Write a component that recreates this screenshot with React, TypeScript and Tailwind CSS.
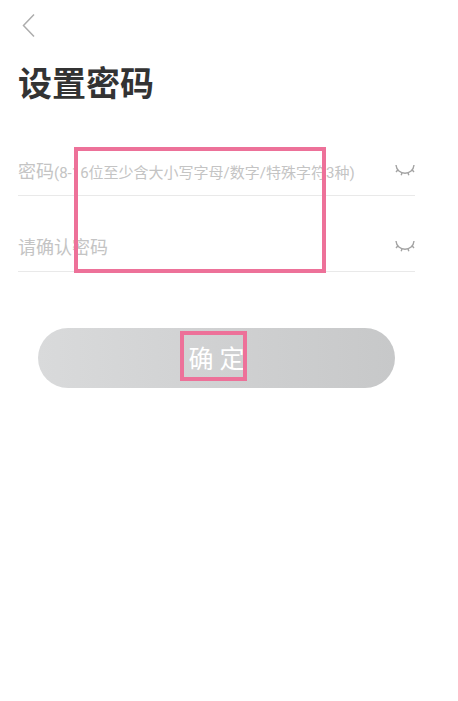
import React, { useState } from 'react';

interface FieldProps {
  id: string;
  label: string;
  hint?: string;
}

function ClosedEye() {
  return (
    <svg width="20" height="14" viewBox="0 0 20 14" fill="none" stroke="#a3a3a3" strokeWidth="1.4">
      <path d="M1 0C1.3 4.8 5.4 8.2 10 8.2S18.7 4.8 19 0" />
      <path d="M3 4.8L1 7M7 7.8L6.2 10.2M13 7.8L13.8 10.2M17 4.8L19 7" />
    </svg>
  );
}

function PasswordField({ id, label, hint }: FieldProps) {
  const [visible, setVisible] = useState(false);

  return (
    <div className="flex h-12 items-center border-b border-[#e9e9e9]">
      <div className="grid flex-1 items-center">
        <input
          id={id}
          type={visible ? 'text' : 'password'}
          placeholder=" "
          className="peer col-start-1 row-start-1 w-full bg-transparent text-lg text-[#333333] outline-none"
        />
        <label
          htmlFor={id}
          className="invisible col-start-1 row-start-1 whitespace-nowrap text-lg text-[#c4c4c4] peer-placeholder-shown:visible"
        >
          {label}
          {hint && <span className="text-[15px]">{hint}</span>}
        </label>
      </div>
      <button type="button" aria-label="显示密码" onClick={() => setVisible(!visible)}>
        <ClosedEye />
      </button>
    </div>
  );
}

export default function App() {
  return (
    <div className="min-h-screen bg-white pt-3 pr-[43px] pl-[18px] font-[Roboto,'Noto_Sans_CJK_SC',sans-serif]">
      <button type="button" aria-label="返回" className="block pl-1">
        <svg width="14" height="28" viewBox="0 0 14 28" fill="none" stroke="#adadad" strokeWidth="1.5">
          <path d="M12 2.5L1.5 13.5L12 24.5" />
        </svg>
      </button>

      <h1 className="mt-6 text-[34px] leading-10 font-bold text-[#333333]">设置密码</h1>

      <form onSubmit={(e) => e.preventDefault()}>
        <div className="relative mt-11 flex flex-col gap-7">
          <PasswordField id="password" label="密码" hint="(8-16位至少含大小写字母/数字/特殊字符3种)" />
          <PasswordField id="confirm" label="请确认密码" />
          {/* highlight around both inputs */}
          <div className="pointer-events-none absolute -top-px -bottom-px left-14 w-[252px] border-4 border-[#ed7199]"></div>
        </div>

        <div className="mt-14 px-5">
          <button
            type="submit"
            className="flex h-15 w-full items-center justify-center rounded-full bg-linear-to-r from-[#d9dadb] to-[#c7c8c9] pt-1 text-[25px] text-white"
          >
            <span className="relative">
              确 定
              <span className="pointer-events-none absolute -top-2.5 -right-0.5 -bottom-0.5 -left-2 border-4 border-[#ed7199]"></span>
            </span>
          </button>
        </div>
      </form>
    </div>
  );
}
